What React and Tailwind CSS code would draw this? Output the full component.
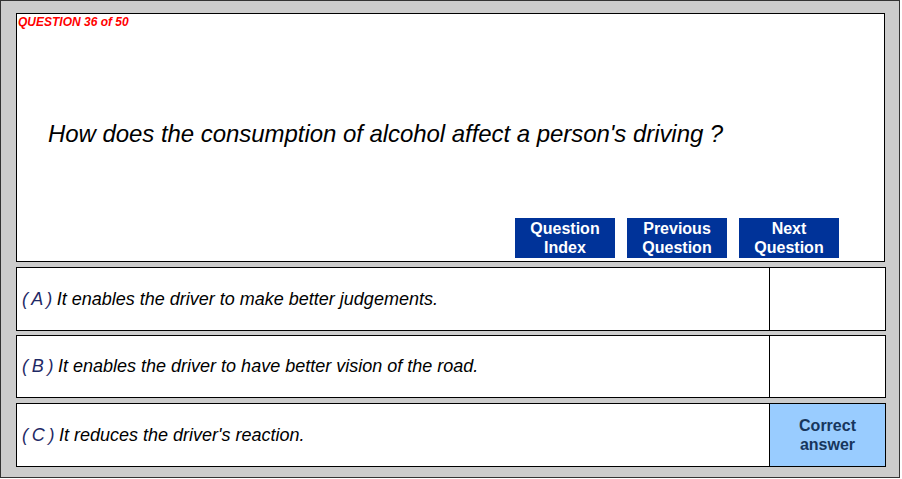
import React from 'react';

const answers = [
  { letter: 'A', text: 'It enables the driver to make better judgements.', h: 'h-[64px]', mt: 'mt-[5px]' },
  { letter: 'B', text: 'It enables the driver to have better vision of the road.', h: 'h-[63px]', mt: 'mt-[4px]' },
  { letter: 'C', text: "It reduces the driver's reaction.", h: 'h-[64px]', mt: 'mt-[5px]', correct: true },
];

function NavButton({ top, bottom }) {
  return (
    <button className="w-[100px] h-[40px] bg-[#003399] text-white font-bold text-[16px] leading-[19px] flex flex-col items-center justify-center">
      <span>{top}</span>
      <span>{bottom}</span>
    </button>
  );
}

export default function App() {
  return (
    <div
      className="w-[900px] h-[478px] border border-[#333333] bg-[#cccccc] pl-[15px] pt-[12px] flex flex-col"
      style={{ fontFamily: '"Liberation Sans", Arial, sans-serif' }}
    >
      {/* Question panel */}
      <div className="w-[869px] h-[249px] border border-black bg-white flex flex-col">
        <div className="pl-[1px] pt-[1px] text-[12px] leading-[14px] font-bold italic text-[#ff0000]">
          QUESTION 36 of 50
        </div>
        <p className="mt-[91px] pl-[31px] text-[24px] leading-[28px] tracking-[-0.05px] italic text-black">
          How does the consumption of alcohol affect a person's driving ?
        </p>
        <div className="mt-auto flex justify-end gap-[12px] pr-[45px] pb-[3px]">
          <NavButton top="Question" bottom="Index" />
          <NavButton top="Previous" bottom="Question" />
          <NavButton top="Next" bottom="Question" />
        </div>
      </div>

      {/* Answer rows */}
      {answers.map((a) => (
        <div key={a.letter} className={`${a.mt} ${a.h} w-[870px] border border-black bg-white flex`}>
          <div className="flex-1 flex items-center pl-[5px] text-[18px] italic text-black">
            <span className="text-[#1f2a66] tracking-[-0.6px]">( {a.letter} )</span>
            <span>&nbsp;{a.text}</span>
          </div>
          <div
            className={`w-[116px] border-l border-black flex flex-col items-center justify-center font-bold text-[16px] leading-[19px] text-[#17365d] ${
              a.correct ? 'bg-[#99ccff]' : 'bg-white'
            }`}
          >
            {a.correct && (
              <>
                <span>Correct</span>
                <span>answer</span>
              </>
            )}
          </div>
        </div>
      ))}
    </div>
  );
}
